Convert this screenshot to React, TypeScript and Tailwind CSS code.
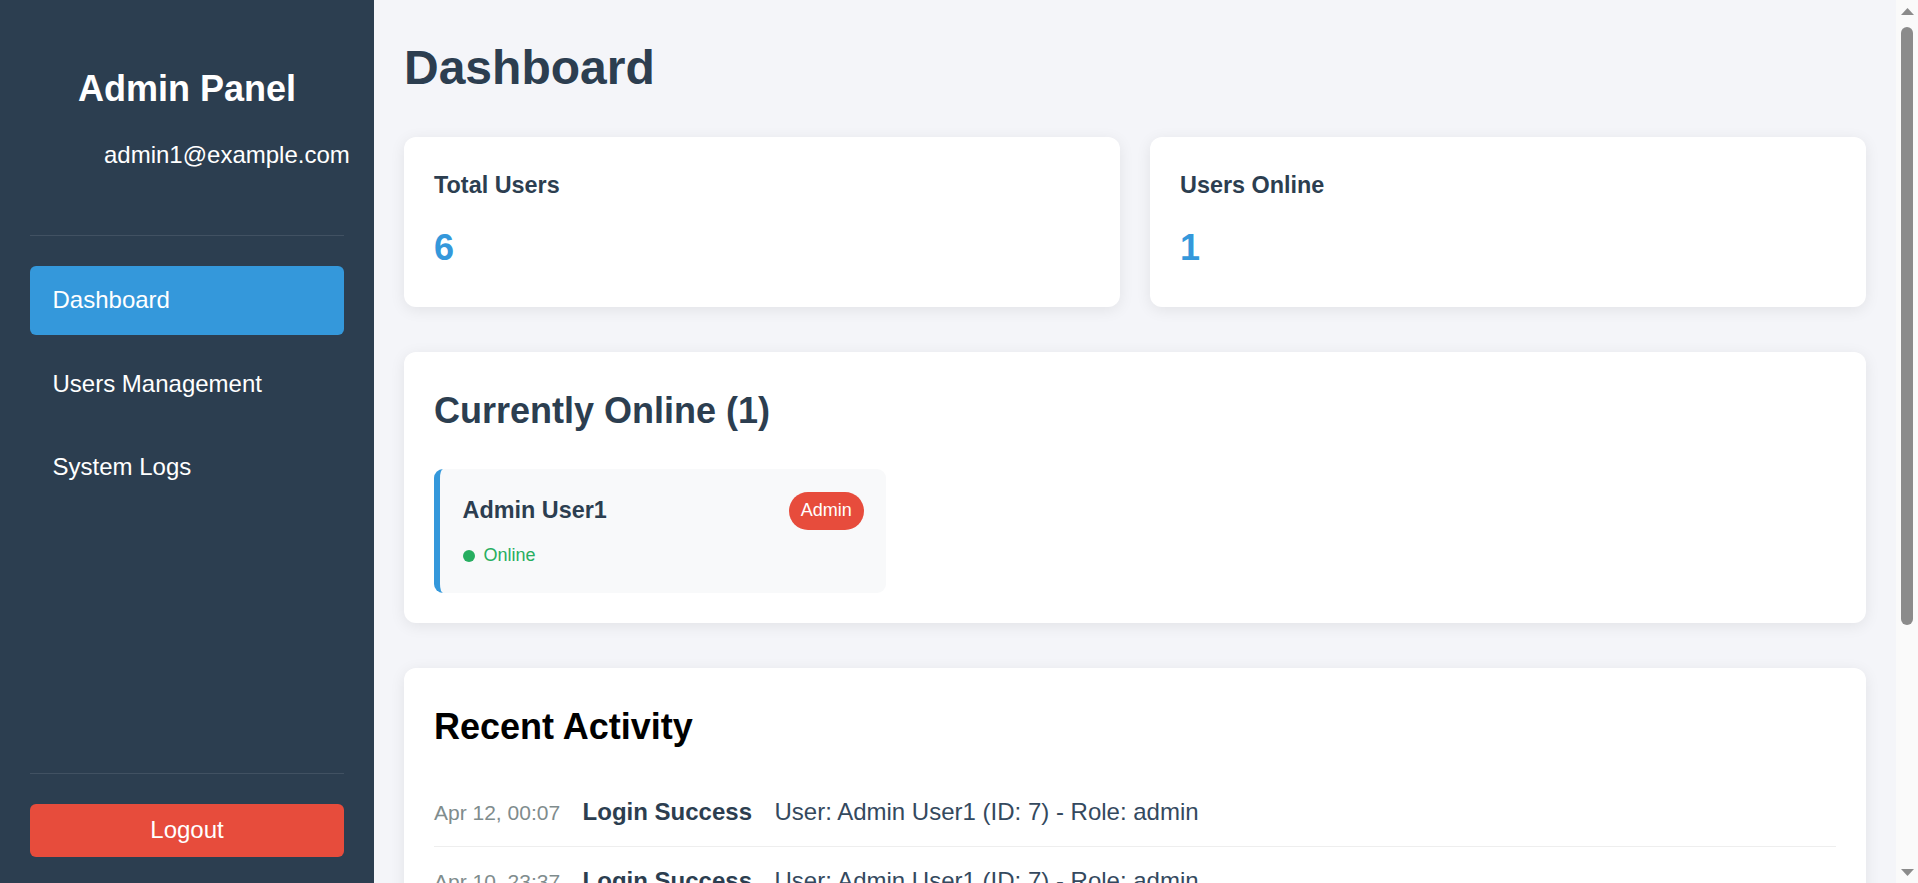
import React from "react";

const activity = [
  { time: "Apr 12, 00:07", action: "Login Success", details: "User: Admin User1 (ID: 7) - Role: admin" },
  { time: "Apr 10, 23:37", action: "Login Success", details: "User: Admin User1 (ID: 7) - Role: admin" },
  { time: "Apr 10, 21:12", action: "Logout", details: "User: Admin User1 (ID: 7) - Role: admin" },
  { time: "Apr 10, 20:58", action: "User Created", details: "User: John Smith (ID: 6) - Role: user" },
  { time: "Apr 09, 18:44", action: "Login Success", details: "User: Admin User1 (ID: 7) - Role: admin" },
];

const navItems = ["Dashboard", "Users Management", "System Logs"];

const card = "bg-white rounded-[12px] p-[30px] shadow-[0_3px_15px_rgba(0,0,0,0.08)]";

export default function App() {
  return (
    <div className="flex h-screen w-full overflow-hidden font-['Liberation_Sans',Arial,sans-serif] leading-[1.6]">
      {/* Sidebar */}
      <aside className="w-[374px] shrink-0 h-full bg-[#2c3e50] text-white flex flex-col px-[30px]">
        <div className="pt-[60px] pb-[61px] border-b border-white/10">
          <h2 className="text-[36px] font-bold text-center">Admin Panel</h2>
          <div className="mt-[18.5px] ml-[74px] text-[24px] whitespace-nowrap">admin1@example.com</div>
        </div>

        <nav className="flex-1 pt-[30px] flex flex-col gap-[15px]">
          {navItems.map((item, i) => (
            <div
              key={item}
              className={
                i === 0
                  ? "bg-[#3498db] rounded-[6px] px-[22.5px] py-[15px] text-[24px] text-white"
                  : "rounded-[6px] px-[22.5px] py-[15px] text-[24px] text-white"
              }
            >
              {item}
            </div>
          ))}
        </nav>

        <div className="border-t border-white/10 pt-[30px] pb-[26px]">
          <button className="w-full h-[53px] bg-[#e74c3c] rounded-[6px] text-white text-[24px] flex items-center justify-center">
            Logout
          </button>
        </div>
      </aside>

      {/* Main */}
      <main className="flex-1 h-full overflow-hidden bg-[#f4f5f9] px-[30px] pt-[30px] pb-[60px]">
        <h1 className="text-[48px] font-bold text-[#2c3e50] mb-[30px]">Dashboard</h1>

        <div className="grid grid-cols-2 gap-[30px] mb-[45px]">
          <div className={card}>
            <h3 className="text-[23.4px] font-bold text-[#2c3e50]">Total Users</h3>
            <div className="mt-[15px] text-[36px] font-bold text-[#3498db]">6</div>
          </div>
          <div className={card}>
            <h3 className="text-[23.4px] font-bold text-[#2c3e50]">Users Online</h3>
            <div className="mt-[15px] text-[36px] font-bold text-[#3498db]">1</div>
          </div>
        </div>

        <section className={card + " mb-[45px]"}>
          <h2 className="text-[36px] font-bold text-[#2c3e50] mb-[30px]">Currently Online (1)</h2>
          <div className="grid grid-cols-3 gap-[22.5px]">
            <div className="bg-[#f8f9fa] border-l-[6px] border-[#3498db] rounded-[9px] p-[22.5px]">
              <div className="flex items-center justify-between">
                <span className="text-[23.4px] font-bold text-[#2c3e50]">Admin User1</span>
                <span className="bg-[#e74c3c] text-white text-[18px] px-[12px] py-[4.5px] rounded-full">Admin</span>
              </div>
              <div className="mt-[11.5px] flex items-center gap-[9px] text-[18px] text-[#27ae60]">
                <span className="w-[12px] h-[12px] rounded-full bg-[#27ae60]" />
                Online
              </div>
            </div>
          </div>
        </section>

        <section className={card}>
          <h2 className="text-[36px] font-bold text-black mb-[22.5px]">Recent Activity</h2>
          <div>
            {activity.map((a, i) => (
              <div key={i} className="flex items-baseline gap-[22.5px] py-[15px] border-b border-[#eeeeee]">
                <span className="text-[21px] text-[#7f8c8d] whitespace-nowrap">{a.time}</span>
                <span className="text-[24px] font-bold text-[#2c3e50] whitespace-nowrap">{a.action}</span>
                <span className="text-[24px] text-[#34495e]">{a.details}</span>
              </div>
            ))}
          </div>
        </section>
      </main>

      {/* Scrollbar */}
      <div className="w-[22px] shrink-0 h-full bg-[#fafafa] flex flex-col items-center">
        <div className="h-[22px] w-full flex items-center justify-center">
          <svg width="13" height="7" viewBox="0 0 13 7">
            <polygon points="6.5,0 13,7 0,7" fill="#8b8b8b" />
          </svg>
        </div>
        <div className="flex-1 w-full">
          <div className="mt-[5px] ml-[5px] w-[12px] h-[598px] rounded-full bg-[#8b8b8b]" />
        </div>
        <div className="h-[22px] w-full flex items-center justify-center">
          <svg width="13" height="7" viewBox="0 0 13 7">
            <polygon points="0,0 13,0 6.5,7" fill="#8b8b8b" />
          </svg>
        </div>
      </div>
    </div>
  );
}
